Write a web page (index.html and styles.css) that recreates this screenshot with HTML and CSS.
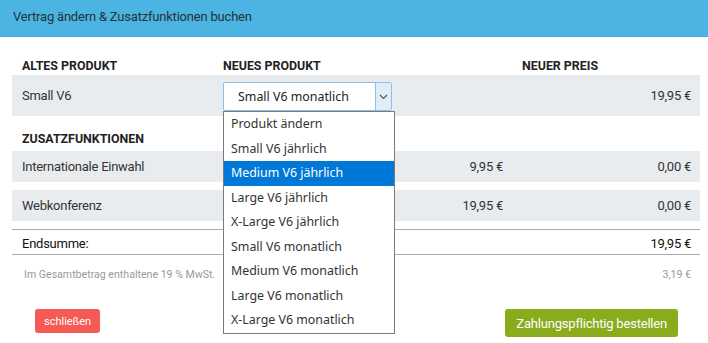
FILE: index.html
```html
<!DOCTYPE html>
<html lang="de">
<head>
  <meta charset="UTF-8">
  <title>Vertrag ändern</title>
  <link rel="stylesheet" href="styles.css">
</head>
<body>
  <div class="modal">
    <div class="modal-header">Vertrag ändern &amp; Zusatzfunktionen buchen</div>
    <div class="modal-body">
      <div class="grid head">
        <div class="cell">ALTES PRODUKT</div>
        <div class="cell">NEUES PRODUKT</div>
        <div class="cell"></div>
        <div class="cell">NEUER PREIS</div>
      </div>
      <div class="grid row row-main">
        <div class="cell">Small V6</div>
        <div class="cell">
          <div class="select-wrap">
            <div class="select">
              <span class="select-value">Small V6 monatlich</span>
              <span class="select-arrow">
                <svg width="9" height="6" viewBox="0 0 9 6"><path d="M1 1l3.5 3.5L8 1" fill="none" stroke="#555" stroke-width="1.2"/></svg>
              </span>
            </div>
            <ul class="options">
              <li>Produkt ändern</li>
              <li>Small V6 jährlich</li>
              <li class="active">Medium V6 jährlich</li>
              <li>Large V6 jährlich</li>
              <li>X-Large V6 jährlich</li>
              <li>Small V6 monatlich</li>
              <li>Medium V6 monatlich</li>
              <li>Large V6 monatlich</li>
              <li>X-Large V6 monatlich</li>
            </ul>
          </div>
        </div>
        <div class="cell"></div>
        <div class="cell num">19,95 €</div>
      </div>
      <div class="grid head sub">
        <div class="cell">ZUSATZFUNKTIONEN</div>
      </div>
      <div class="grid row">
        <div class="cell">Internationale Einwahl</div>
        <div class="cell"></div>
        <div class="cell num">9,95 €</div>
        <div class="cell num">0,00 €</div>
      </div>
      <div class="grid row">
        <div class="cell">Webkonferenz</div>
        <div class="cell"></div>
        <div class="cell num">19,95 €</div>
        <div class="cell num">0,00 €</div>
      </div>
      <div class="grid total">
        <div class="cell">Endsumme:</div>
        <div class="cell"></div>
        <div class="cell"></div>
        <div class="cell num">19,95 €</div>
      </div>
      <div class="grid tax">
        <div class="cell span3">Im Gesamtbetrag enthaltene 19 % MwSt.</div>
        <div class="cell num">3,19 €</div>
      </div>
      <div class="actions">
        <button class="btn btn-close">schließen</button>
        <button class="btn btn-order">Zahlungspflichtig bestellen</button>
      </div>
    </div>
  </div>
</body>
</html>
```
FILE: styles.css
```css
body {
  margin: 0;
  font-family: 'Roboto', sans-serif;
  background-color: #fff;
  color: #333;
}

.modal {
  width: 708px;
}

.modal-header {
  background-color: #4bb4e2;
  border-bottom: 1px solid #44a9d6;
  height: 36px;
  line-height: 34px;
  padding-left: 13px;
  font-size: 13px;
  letter-spacing: -0.2px;
  color: #263238;
}

.modal-body {
  padding: 0 8px 0 12px;
}

.grid {
  display: grid;
  grid-template-columns: 200px 200px 100px 188px;
}

.cell {
  padding: 0 9px 0 10px;
}

.cell.num {
  text-align: right;
}

.head {
  margin-top: 20px;
  height: 18px;
  line-height: 18px;
  font-size: 12.4px;
  font-weight: bold;
  color: #222;
}

.head .cell:nth-child(2) {
  padding-left: 11px;
}

.sub {
  margin-top: 13px;
  height: 22px;
  line-height: 20px;
}

.row {
  background-color: #e9ecef;
  height: 31px;
  line-height: 31px;
  font-size: 13px;
  letter-spacing: -0.25px;
  margin-bottom: 8px;
}

.row-main {
  height: 41px;
  line-height: 41px;
  margin-bottom: 0;
}

.select-wrap {
  position: relative;
  margin-left: 1px;
  padding-top: 7px;
  letter-spacing: 0;
}

.select {
  display: flex;
  width: 167px;
  height: 27px;
  border: 1px solid #8dbde8;
  border-radius: 2px;
  background-color: #fff;
  line-height: 27px;
  font-family: 'Noto Sans', sans-serif;
  font-size: 12.4px;
  color: #222;
}

.select-value {
  flex: 1;
  padding-left: 14px;
}

.select-arrow {
  width: 15px;
  border-left: 1px solid #8dbde8;
  background-color: #dfedf9;
  display: flex;
  align-items: center;
  justify-content: center;
}

.options {
  position: absolute;
  top: 36px;
  left: 0;
  width: 170px;
  margin: 0;
  padding: 0;
  list-style: none;
  background-color: #fff;
  border: 1px solid #7a7a7a;
  font-family: 'Noto Sans', sans-serif;
  font-size: 12.4px;
  color: #333;
  line-height: 24.5px;
  z-index: 2;
}

.options li {
  padding-left: 7px;
}

.options li.active {
  background-color: #0078d7;
  color: #fff;
}

.total {
  border-top: 1px solid #aaa;
  border-bottom: 1px solid #aaa;
  height: 24px;
  line-height: 28px;
  font-size: 13px;
  letter-spacing: -0.25px;
  color: #111;
}

.tax {
  margin-top: 10px;
  font-size: 10.6px;
  color: #999;
  line-height: 20px;
}

.tax .span3 {
  padding-left: 12px;
}

.span3 {
  grid-column: span 3;
}

.actions {
  display: flex;
  justify-content: space-between;
  align-items: flex-start;
  margin-top: 24px;
  padding: 0 22px 0 23px;
}

.btn {
  border: none;
  border-radius: 3px;
  color: #fff;
  font-family: 'Roboto', sans-serif;
  cursor: pointer;
}

.btn-close {
  background-color: #f55a55;
  font-size: 11px;
  height: 24px;
  padding: 0 9px;
}

.btn-order {
  background-color: #8aab1b;
  font-size: 13px;
  letter-spacing: -0.2px;
  height: 28px;
  padding: 0 11px;
}
```
